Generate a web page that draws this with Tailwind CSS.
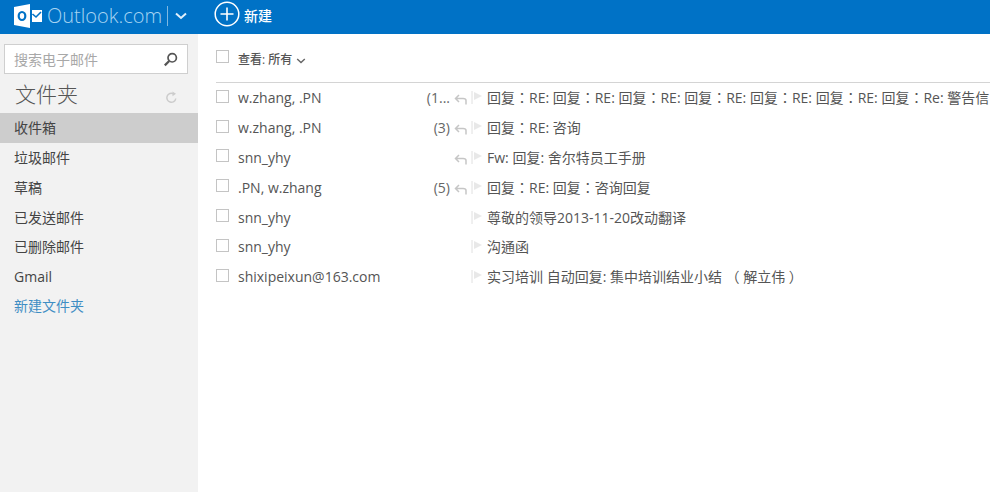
<!DOCTYPE html>
<html lang="zh">
<head>
<meta charset="utf-8">
<script src="https://cdn.jsdelivr.net/npm/@tailwindcss/browser@4"></script>
</head>
<body class="w-[990px] h-[492px] overflow-hidden bg-white font-['Open_Sans','Noto_Sans_CJK_SC',sans-serif] text-[#555]">
<header class="h-[34px] bg-[#0072c6] flex items-center text-white">
  <svg class="ml-[14px] w-[29px] h-[24px] mt-[-3px]" viewBox="0 0 29 24"><path d="M0 3 L16 0 V24 L0 21Z" fill="#fff"/><path d="M18 6H28V18H18Z" fill="#fff"/><path d="M18.500 10l3.500 3 5-5" fill="none" stroke="#0072c6" stroke-width="1.600"/><ellipse cx="8" cy="12" rx="3.300" ry="4" fill="none" stroke="#0072c6" stroke-width="2.200"/></svg>
  <span class="ml-[4px] text-[20px] leading-none font-light text-[#a6d4f2] mt-[-3px] w-[110px] whitespace-nowrap">Outlook.com</span>
  <span class="ml-[10px] w-px h-[20px] bg-[#7fb8e2] mt-[-3px]"></span>
  <svg class="ml-[7px] w-[12px] h-[8px] mt-[-3px]" viewBox="0 0 12 8"><path d="M1 1.500l5 4.500 5-4.500" fill="none" stroke="#e0f0fb" stroke-width="2"/></svg>
  <svg class="ml-[27px] w-[26px] h-[26px] mt-[-6px]" viewBox="0 0 26 26"><circle cx="13" cy="13" r="11.800" fill="none" stroke="#fff" stroke-width="1.500"/><path d="M13 6.500v13M6.500 13h13" stroke="#fff" stroke-width="1.600"/></svg>
  <span class="ml-[4px] text-[14px] font-medium mt-[-3px]">新建</span>
</header>
<div class="flex h-[458px]">
  <aside class="w-[198px] bg-[#f2f2f2] pt-[10px]">
    <div class="mx-[4px] w-[184px] h-[30px] bg-white border border-[#cfcfcf] flex items-center justify-between pl-[9px] pr-[9px]">
      <span class="text-[14px] text-[#a8a8a8]">搜索电子邮件</span>
      <svg class="w-[15px] h-[15px]" viewBox="0 0 15 15"><circle cx="9.200" cy="5.800" r="4.200" fill="none" stroke="#555" stroke-width="1.700"/><path d="M6.200 9L1.800 13.400" stroke="#555" stroke-width="2.200"/></svg>
    </div>
    <div class="h-[39px] flex items-center justify-between pl-[15px] pr-[20px]">
      <span class="text-[21px] leading-none text-[#555] font-light mt-[2px]">文件夹</span>
      <svg class="w-[13px] h-[13px] mt-[8px]" viewBox="0 0 13 13"><path d="M10.800 7.500A4.500 4.500 0 1 1 8.500 2.800" fill="none" stroke="#ccc" stroke-width="1.500"/><path d="M7.500 0.500V5.200L11 2.800Z" fill="#ccc"/></svg>
    </div>
    <nav class="text-[14px] text-[#444]">
      <div class="h-[30px] bg-[#cdcdcd] flex items-center pl-[14px] pb-[2px]">收件箱</div>
      <div class="h-[30px] flex items-center pl-[14px] pb-[2px]">垃圾邮件</div>
      <div class="h-[30px] flex items-center pl-[14px] pb-[2px]">草稿</div>
      <div class="h-[30px] flex items-center pl-[14px] pb-[2px]">已发送邮件</div>
      <div class="h-[29.500px] flex items-center pl-[14px] pb-[2px]">已删除邮件</div>
      <div class="h-[29.500px] flex items-center pl-[14px] pb-[2px]">Gmail</div>
      <div class="h-[29.500px] flex items-center pl-[14px] pb-[2px] text-[#3f8ec4]">新建文件夹</div>
    </nav>
  </aside>
  <main class="flex-1 pl-[18px] min-w-0">
    <div class="h-[49px] flex items-center border-b border-[#d4d4d4]">
      <span class="w-[13px] h-[13px] border border-[#c4c4c4] mt-[-3px]"></span>
      <span class="ml-[9px] text-[12px] font-medium text-[#555] mt-[3px]">查看: 所有</span>
      <svg class="ml-[4px] w-[10px] h-[6px] mt-[5px]" viewBox="0 0 9 6"><path d="M.7 1l3.800 3.600L8.300 1" fill="none" stroke="#666" stroke-width="1.400"/></svg>
    </div>
    <div lang="zh-Hant" class="font-['Open_Sans','Noto_Sans_CJK_TC',sans-serif]">
      <div class="h-[29.800px] flex items-center text-[14px] whitespace-nowrap">
        <span class="w-[13px] h-[13px] border border-[#c4c4c4] mt-[-3px] shrink-0"></span><span class="w-[192px] ml-[9px] shrink-0">w.zhang, .PN</span>
        <span class="w-[25px] text-right text-[#666] mr-[4px] ml-[-5px]">(1...</span>
        <svg class="w-[13px] h-[11px] mt-[4px] shrink-0" viewBox="0 0 13 11"><path d="M12 10.500V6.500Q12 4.500 9 4.500H2M5 1L1.500 4.500L5 8" fill="none" stroke="#c6c6c6" stroke-width="1.500"/></svg>
        <svg class="ml-[4px] w-[12px] h-[13px] shrink-0" viewBox="0 0 12 13"><path d="M1 0v13" stroke="#e0e0e0"/><path d="M3 1l8 4-8 4Z" fill="#e8e8e8"/></svg>
        <span class="ml-[4px]">回复：RE: 回复：RE: 回复：RE: 回复：RE: 回复：RE: 回复：RE: 回复：Re: 警告信</span>
      </div>
      <div class="h-[29.800px] flex items-center text-[14px] whitespace-nowrap">
        <span class="w-[13px] h-[13px] border border-[#c4c4c4] mt-[-3px] shrink-0"></span><span class="w-[192px] ml-[9px] shrink-0">w.zhang, .PN</span>
        <span class="w-[25px] text-right text-[#666] mr-[4px] ml-[-5px]">(3)</span>
        <svg class="w-[13px] h-[11px] mt-[4px] shrink-0" viewBox="0 0 13 11"><path d="M12 10.500V6.500Q12 4.500 9 4.500H2M5 1L1.500 4.500L5 8" fill="none" stroke="#c6c6c6" stroke-width="1.500"/></svg>
        <svg class="ml-[4px] w-[12px] h-[13px] shrink-0" viewBox="0 0 12 13"><path d="M1 0v13" stroke="#e0e0e0"/><path d="M3 1l8 4-8 4Z" fill="#e8e8e8"/></svg>
        <span class="ml-[4px]">回复：RE: 咨询</span>
      </div>
      <div class="h-[29.800px] flex items-center text-[14px] whitespace-nowrap">
        <span class="w-[13px] h-[13px] border border-[#c4c4c4] mt-[-3px] shrink-0"></span><span class="w-[192px] ml-[9px] shrink-0">snn_yhy</span>
        <span class="w-[25px] mr-[4px] ml-[-5px]"></span>
        <svg class="w-[13px] h-[11px] mt-[4px] shrink-0" viewBox="0 0 13 11"><path d="M12 10.500V6.500Q12 4.500 9 4.500H2M5 1L1.500 4.500L5 8" fill="none" stroke="#c6c6c6" stroke-width="1.500"/></svg>
        <svg class="ml-[4px] w-[12px] h-[13px] shrink-0" viewBox="0 0 12 13"><path d="M1 0v13" stroke="#e0e0e0"/><path d="M3 1l8 4-8 4Z" fill="#e8e8e8"/></svg>
        <span class="ml-[4px]">Fw: 回复: 舍尔特员工手册</span>
      </div>
      <div class="h-[29.800px] flex items-center text-[14px] whitespace-nowrap">
        <span class="w-[13px] h-[13px] border border-[#c4c4c4] mt-[-3px] shrink-0"></span><span class="w-[192px] ml-[9px] shrink-0">.PN, w.zhang</span>
        <span class="w-[25px] text-right text-[#666] mr-[4px] ml-[-5px]">(5)</span>
        <svg class="w-[13px] h-[11px] mt-[4px] shrink-0" viewBox="0 0 13 11"><path d="M12 10.500V6.500Q12 4.500 9 4.500H2M5 1L1.500 4.500L5 8" fill="none" stroke="#c6c6c6" stroke-width="1.500"/></svg>
        <svg class="ml-[4px] w-[12px] h-[13px] shrink-0" viewBox="0 0 12 13"><path d="M1 0v13" stroke="#e0e0e0"/><path d="M3 1l8 4-8 4Z" fill="#e8e8e8"/></svg>
        <span class="ml-[4px]">回复：RE: 回复：咨询回复</span>
      </div>
      <div class="h-[29.800px] flex items-center text-[14px] whitespace-nowrap">
        <span class="w-[13px] h-[13px] border border-[#c4c4c4] mt-[-3px] shrink-0"></span><span class="w-[192px] ml-[9px] shrink-0">snn_yhy</span>
        <span class="w-[25px] mr-[4px] ml-[-5px]"></span><span class="w-[13px] shrink-0"></span>
        <svg class="ml-[4px] w-[12px] h-[13px] shrink-0" viewBox="0 0 12 13"><path d="M1 0v13" stroke="#e0e0e0"/><path d="M3 1l8 4-8 4Z" fill="#e8e8e8"/></svg>
        <span class="ml-[4px]">尊敬的领导2013-11-20改动翻译</span>
      </div>
      <div class="h-[29.800px] flex items-center text-[14px] whitespace-nowrap">
        <span class="w-[13px] h-[13px] border border-[#c4c4c4] mt-[-3px] shrink-0"></span><span class="w-[192px] ml-[9px] shrink-0">snn_yhy</span>
        <span class="w-[25px] mr-[4px] ml-[-5px]"></span><span class="w-[13px] shrink-0"></span>
        <svg class="ml-[4px] w-[12px] h-[13px] shrink-0" viewBox="0 0 12 13"><path d="M1 0v13" stroke="#e0e0e0"/><path d="M3 1l8 4-8 4Z" fill="#e8e8e8"/></svg>
        <span class="ml-[4px]">沟通函</span>
      </div>
      <div class="h-[29.800px] flex items-center text-[14px] whitespace-nowrap">
        <span class="w-[13px] h-[13px] border border-[#c4c4c4] mt-[-3px] shrink-0"></span><span class="w-[192px] ml-[9px] shrink-0">shixipeixun@163.com</span>
        <span class="w-[25px] mr-[4px] ml-[-5px]"></span><span class="w-[13px] shrink-0"></span>
        <svg class="ml-[4px] w-[12px] h-[13px] shrink-0" viewBox="0 0 12 13"><path d="M1 0v13" stroke="#e0e0e0"/><path d="M3 1l8 4-8 4Z" fill="#e8e8e8"/></svg>
        <span class="ml-[4px]">实习培训 自动回复: 集中培训结业小结 （ 解立伟 ）</span>
      </div>
    </div>
  </main>
</div>
</body>
</html>
